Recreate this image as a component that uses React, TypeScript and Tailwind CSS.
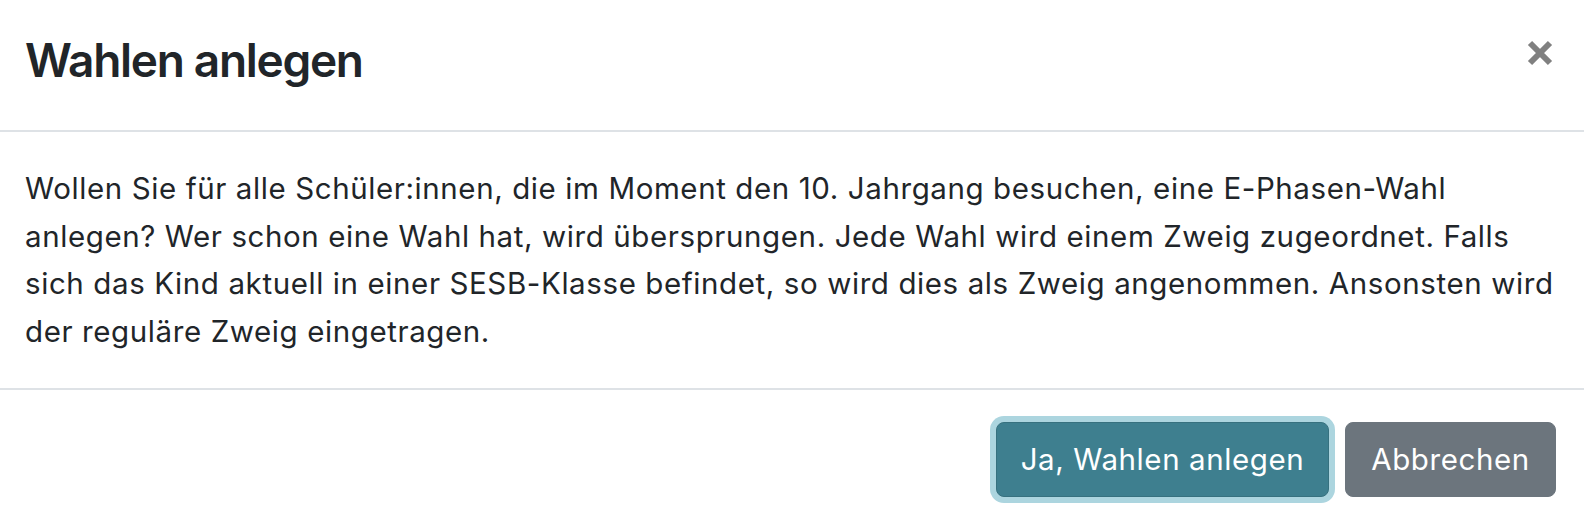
import React from "react";

export default function App() {
  return (
    <div
      className="w-[1584px] h-[520px] overflow-hidden bg-white text-[#212529]"
      style={{ fontFamily: "Inter, 'Noto Sans', sans-serif" }}
    >
      <div className="flex items-start justify-between h-[132px] border-b-2 border-[#dee2e6] pl-[25px] pr-[31px]">
        <h5 className="mt-[31px] text-[46px] leading-[58px] font-semibold tracking-[-1.3px]">
          Wahlen anlegen
        </h5>
        <button className="mt-[40px] w-[26px] h-[26px] text-[#808080]" aria-label="Close">
          <svg viewBox="0 0 26 26" width="26" height="26">
            <path d="M3 3 L23 23 M23 3 L3 23" stroke="currentColor" strokeWidth="6" strokeLinecap="butt" />
          </svg>
        </button>
      </div>
      <div className="h-[258px] border-b-2 border-[#dee2e6] px-[25px] pt-[33px]">
        <p className="text-[29.5px] leading-[47.6px] tracking-[0.6px] whitespace-nowrap">
          Wollen Sie für alle Schüler:innen, die im Moment den 10. Jahrgang besuchen, eine E-Phasen-Wahl
          <br />
          anlegen? Wer schon eine Wahl hat, wird übersprungen. Jede Wahl wird einem Zweig zugeordnet. Falls
          <br />
          sich das Kind aktuell in einer SESB-Klasse befindet, so wird dies als Zweig angenommen. Ansonsten wird
          <br />
          der reguläre Zweig eingetragen.
        </p>
      </div>
      <div className="flex justify-end items-start gap-[16px] pt-[32px] pr-[28px]">
        <button className="h-[75px] w-[333px] rounded-[8px] bg-[#3e7f8f] border border-[#37717f] text-white text-[29.5px] tracking-[0.6px] ring-[6px] ring-[#acd5df] flex items-center justify-center">
          Ja, Wahlen anlegen
        </button>
        <button className="h-[75px] w-[211px] rounded-[8px] bg-[#6c757d] border border-[#6c757d] text-white text-[29.5px] tracking-[0.6px] flex items-center justify-center">
          Abbrechen
        </button>
      </div>
    </div>
  );
}
